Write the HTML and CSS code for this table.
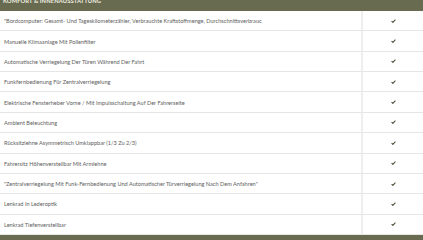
FILE: index.html
```html
<!DOCTYPE html>
<html lang="de">
<head>
<meta charset="utf-8">
<link rel="stylesheet" href="styles.css">
</head>
<body>
<div class="spec">
  <div class="spec-head">KOMFORT &amp; INNENAUSSTATTUNG</div>
  <div class="row"><div class="name">"Bordcomputer: Gesamt- Und Tageskilometerzähler, Verbrauchte Kraftstoffmenge, Durchschnittsverbrauc</div><div class="val"><svg class="chk" viewBox="0 0 6 5"><path d="M0.6 2.8 L2.2 4.3 L5.4 0.8" /></svg></div></div>
  <div class="row"><div class="name">Manuelle Klimaanlage Mit Pollenfilter</div><div class="val"><svg class="chk" viewBox="0 0 6 5"><path d="M0.6 2.8 L2.2 4.3 L5.4 0.8" /></svg></div></div>
  <div class="row"><div class="name">Automatische Verriegelung Der Türen Während Der Fahrt</div><div class="val"><svg class="chk" viewBox="0 0 6 5"><path d="M0.6 2.8 L2.2 4.3 L5.4 0.8" /></svg></div></div>
  <div class="row"><div class="name">Funkfernbedienung Für Zentralverriegelung</div><div class="val"><svg class="chk" viewBox="0 0 6 5"><path d="M0.6 2.8 L2.2 4.3 L5.4 0.8" /></svg></div></div>
  <div class="row"><div class="name">Elektrische Fensterheber Vorne / Mit Impulsschaltung Auf Der Fahrerseite</div><div class="val"><svg class="chk" viewBox="0 0 6 5"><path d="M0.6 2.8 L2.2 4.3 L5.4 0.8" /></svg></div></div>
  <div class="row"><div class="name">Ambient Beleuchtung</div><div class="val"><svg class="chk" viewBox="0 0 6 5"><path d="M0.6 2.8 L2.2 4.3 L5.4 0.8" /></svg></div></div>
  <div class="row"><div class="name">Rücksitzlehne Asymmetrisch Umklappbar (1/3 Zu 2/3)</div><div class="val"><svg class="chk" viewBox="0 0 6 5"><path d="M0.6 2.8 L2.2 4.3 L5.4 0.8" /></svg></div></div>
  <div class="row"><div class="name">Fahrersitz Höhenverstellbar Mit Armlehne</div><div class="val"><svg class="chk" viewBox="0 0 6 5"><path d="M0.6 2.8 L2.2 4.3 L5.4 0.8" /></svg></div></div>
  <div class="row"><div class="name">"Zentralverriegelung Mit Funk-Fernbedienung Und Automatischer Türverriegelung Nach Dem Anfahren"</div><div class="val"><svg class="chk" viewBox="0 0 6 5"><path d="M0.6 2.8 L2.2 4.3 L5.4 0.8" /></svg></div></div>
  <div class="row"><div class="name">Lenkrad In Lederoptik</div><div class="val"><svg class="chk" viewBox="0 0 6 5"><path d="M0.6 2.8 L2.2 4.3 L5.4 0.8" /></svg></div></div>
  <div class="row"><div class="name">Lenkrad Tiefenverstellbar</div><div class="val"><svg class="chk" viewBox="0 0 6 5"><path d="M0.6 2.8 L2.2 4.3 L5.4 0.8" /></svg></div></div>
  <div class="spec-foot"></div>
</div>
</body>
</html>
```
FILE: styles.css
```css
html, body {
  margin: 0;
  padding: 0;
  background: #ffffff;
}
body {
  font-family: Lato, "Open Sans", sans-serif;
  overflow: hidden;
}
.spec {
  display: flex;
  flex-direction: column;
  margin-top: -9px;
}
.spec-head {
  height: 20px;
  background: #686b50;
  color: #f1efe2;
  font-weight: 700;
  font-size: 5.8px;
  line-height: 20px;
  padding-left: 3px;
  letter-spacing: 0.1px;
}
.row {
  display: grid;
  grid-template-columns: 1fr 60px;
  height: 20.36px;
  box-sizing: border-box;
  border-bottom: 1px solid #e6e6e6;
}
.row:last-of-type {
  border-bottom: none;
}
.name {
  display: flex;
  align-items: center;
  padding-left: 4px;
  font-size: 5.6px;
  color: #5e5e5e;
  white-space: nowrap;
  overflow: hidden;
  border-right: 2px solid #eeeeee;
}
.val {
  display: flex;
  align-items: center;
  justify-content: center;
}
.chk {
  width: 5px;
  height: 4px;
  fill: none;
  stroke: #4f5238;
  stroke-width: 1.3;
}
.spec-foot {
  height: 20px;
  background: #686b50;
}
```
